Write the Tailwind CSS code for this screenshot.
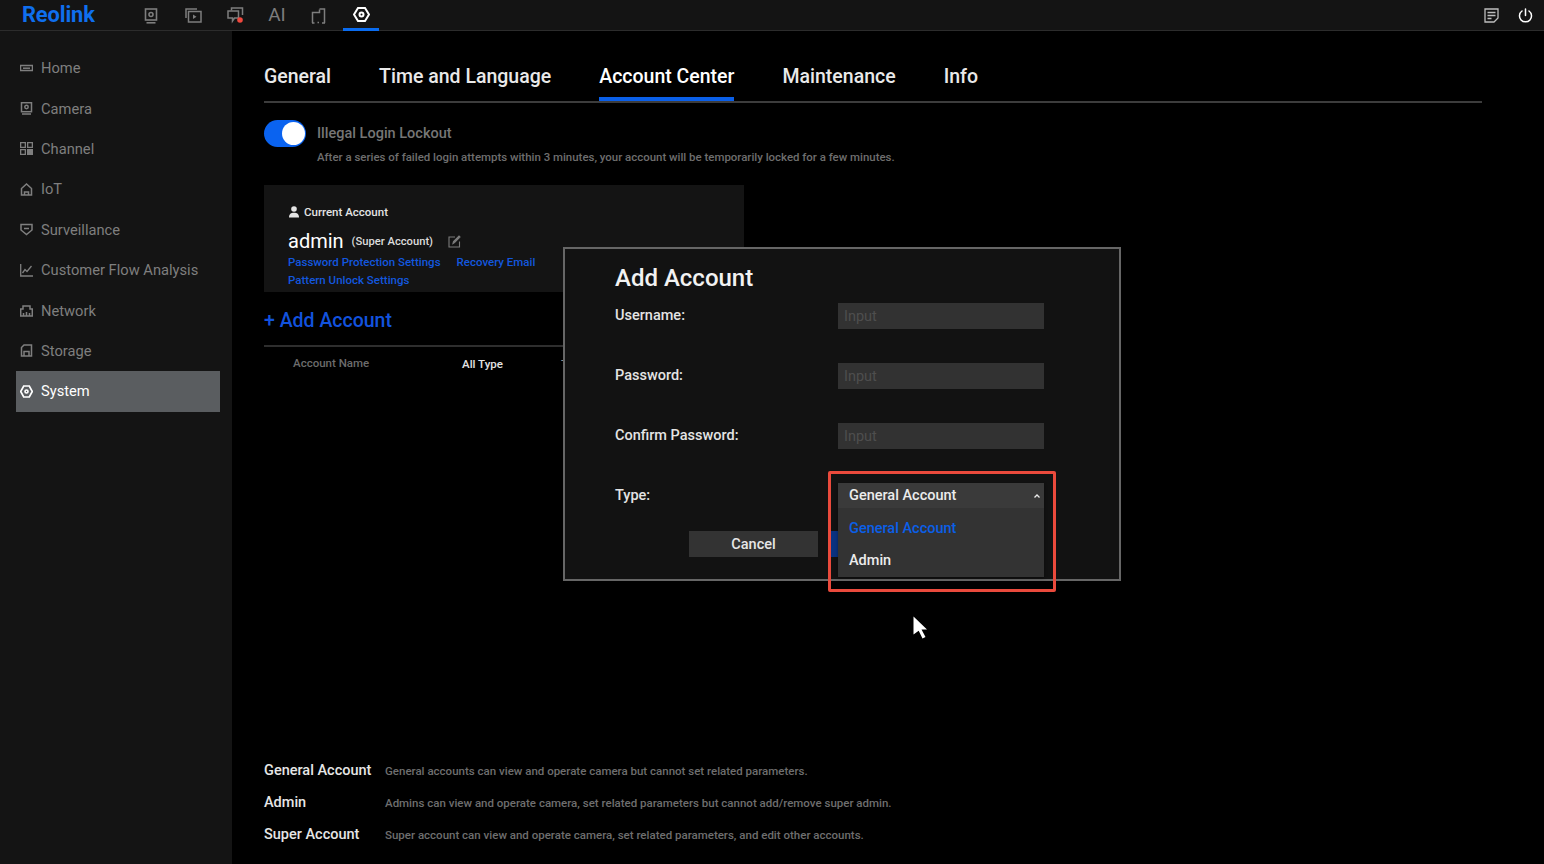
<!DOCTYPE html>
<html lang="en">
  <head>
    <meta charset="UTF-8" />
    <title>Reolink - Account Center</title>
    <script src="https://cdn.jsdelivr.net/npm/@tailwindcss/browser@4"></script>
  </head>
  <body class="bg-black font-['Roboto',sans-serif] text-white">
    <div class="relative flex h-[864px] w-[1544px] flex-col overflow-hidden">
      <!-- top bar -->
      <header class="flex h-[31px] shrink-0 items-center border-b border-[#2c2c2c] bg-[#141414]">
        <span class="ml-[22px] w-[120px] pb-[1px] text-[21.800px] font-bold leading-[28px] tracking-[-0.1px] text-[#0f6fee]">Reolink</span>
        <nav class="flex h-[31px] items-center self-start text-[#7d7d7d]">
          <a class="flex h-full w-[18px] items-center justify-center">
            <svg class="h-[16px] w-[14px]" viewBox="0 0 14 16" fill="none" stroke="currentColor" stroke-width="1.600"><rect x="1.500" y="1" width="11" height="11"/><circle cx="7" cy="6.500" r="2"/><path d="M2.500 14.800h9"/></svg>
          </a>
          <a class="ml-[24px] flex h-full w-[18px] items-center justify-center">
            <svg class="size-[17px]" viewBox="0 0 17 17" fill="none" stroke="currentColor" stroke-width="1.500"><path d="M1 11V2h11"/><rect x="3.500" y="4.500" width="12.500" height="10.500"/><path d="M8 7.500v4.500l3.500-2.200z" fill="currentColor" stroke="none"/></svg>
          </a>
          <a class="ml-[24px] flex h-full w-[18px] items-center justify-center">
            <svg class="size-[17px]" viewBox="0 0 17 17" fill="none" stroke="currentColor" stroke-width="1.500"><path d="M4.500 3.500v-2.500h11v7"/><path d="M1 4h10.500v7H7.500l-2 3v-3H1z"/><circle cx="13" cy="13" r="2.800" fill="#f0483e" stroke="none"/></svg>
          </a>
          <span class="ml-[24px] w-[18px] text-center text-[19px]">AI</span>
          <a class="ml-[23px] flex h-full w-[18px] items-center justify-center">
            <svg class="h-[16px] w-[15px]" viewBox="0 0 15 16" fill="none" stroke="currentColor" stroke-width="1.500"><path d="M1.500 15V4.500h7V1.500"/><path d="M8.500 1h5V15"/><path d="M1 15h2.500M6.500 14.500h1.500M11 15h3"/></svg>
          </a>
          <a class="ml-[16px] flex h-full w-[36px] items-center justify-center border-b-[3px] border-[#0a6cf0] text-white">
            <svg class="size-[17px]" viewBox="0 0 17 17" fill="none" stroke="currentColor" stroke-width="2"><path d="M5 2h7l4 6.500-4 6.500H5L1 8.500z"/><circle cx="8.500" cy="8.500" r="2"/></svg>
          </a>
        </nav>
        <div class="ml-auto flex items-center gap-[19px] pr-[11px] text-[#bdbdbd]">
          <svg class="size-[15px]" viewBox="0 0 15 15" fill="none" stroke="currentColor" stroke-width="1.300"><path d="M1 1h13v9l-4 4H1z"/><path d="M3.500 4.500h8M3.500 7.500h8M3.500 10.500h4"/></svg>
          <svg class="size-[15px] text-white" viewBox="0 0 15 15" fill="none" stroke="currentColor" stroke-width="1.500" stroke-linecap="round"><path d="M7.500 1v6.500"/><path d="M4 3a6 6 0 1 0 7 0"/></svg>
        </div>
      </header>

      <div class="flex min-h-0 flex-1">
        <!-- side menu -->
        <aside class="w-[232px] shrink-0 bg-[#141414] pt-[17px] text-[14.700px] text-[#7f7f7f]">
          <ul>
            <li class="ml-[16px] mr-[12px] flex h-[40.4px] items-center gap-[8px] pl-[4px]">
              <svg class="size-[13px] shrink-0" viewBox="0 0 13 13" fill="none" stroke="currentColor" stroke-width="1.500"><rect x="0.500" y="3.500" width="12" height="5"/><path d="M3 6.200h7"/></svg>Home
            </li>
            <li class="ml-[16px] mr-[12px] flex h-[40.4px] items-center gap-[8px] pl-[4px]">
              <svg class="size-[13px] shrink-0" viewBox="0 0 13 13" fill="none" stroke="currentColor" stroke-width="1.500"><rect x="1.500" y="0.700" width="10" height="9"/><circle cx="6.500" cy="5" r="1.700"/><path d="M2 12h9"/></svg>Camera
            </li>
            <li class="ml-[16px] mr-[12px] flex h-[40.4px] items-center gap-[8px] pl-[4px]">
              <svg class="size-[13px] shrink-0" viewBox="0 0 13 13" fill="currentColor"><path d="M0 0h6v6H0zM1.300 1.300v3.400h3.400V1.300zM7 0h6v6H7zM8.300 1.300v3.400h3.400V1.300zM0 7h6v6H0zM1.300 8.300v3.400h3.400V8.300zM7 7h6v6H7z" fill-rule="evenodd"/></svg>Channel
            </li>
            <li class="ml-[16px] mr-[12px] flex h-[40.4px] items-center gap-[8px] pl-[4px]">
              <svg class="size-[13px] shrink-0" viewBox="0 0 13 13" fill="none" stroke="currentColor" stroke-width="1.500"><path d="M1.500 12V5.500l5-4.500 5 4.500V12z"/><path d="M4.500 12V9h4v3"/></svg>IoT
            </li>
            <li class="ml-[16px] mr-[12px] flex h-[40.4px] items-center gap-[8px] pl-[4px]">
              <svg class="size-[13px] shrink-0" viewBox="0 0 13 13" fill="none" stroke="currentColor" stroke-width="1.500"><path d="M1 1.500h11v5.500l-5.500 4.500L1 7z"/><path d="M4 5.500h5"/></svg>Surveillance
            </li>
            <li class="ml-[16px] mr-[12px] flex h-[40.4px] items-center gap-[8px] pl-[4px]">
              <svg class="size-[13px] shrink-0" viewBox="0 0 13 13" fill="none" stroke="currentColor" stroke-width="1.300"><path d="M0.700 0v12h12.300"/><path d="M2.500 9l2.500-3.500 2 2L11.500 2"/></svg>Customer Flow Analysis
            </li>
            <li class="ml-[16px] mr-[12px] flex h-[40.4px] items-center gap-[8px] pl-[4px]">
              <svg class="size-[13px] shrink-0" viewBox="0 0 13 13" fill="none" stroke="currentColor" stroke-width="1.500"><path d="M0.700 12V5h2.300V2h7v3h2.300v7z"/><path d="M3.500 12V9M6.500 12V8M9.500 12V9"/></svg>Network
            </li>
            <li class="ml-[16px] mr-[12px] flex h-[40.4px] items-center gap-[8px] pl-[4px]">
              <svg class="size-[13px] shrink-0" viewBox="0 0 13 13" fill="none" stroke="currentColor" stroke-width="1.500"><path d="M1.500 12V3.500L4 1h7.500v11z"/><path d="M4 12V7.500h5V12"/></svg>Storage
            </li>
            <li class="ml-[16px] mr-[12px] flex h-[40.4px] items-center gap-[8px] bg-[#5a5d60] pl-[4px] text-white">
              <svg class="size-[13px] shrink-0" viewBox="0 0 13 13" fill="none" stroke="currentColor" stroke-width="1.700"><path d="M3.700 1h5.600l3 5.500-3 5.500H3.700l-3-5.500z"/><circle cx="6.500" cy="6.500" r="1.500"/></svg>System
            </li>
          </ul>
        </aside>

        <!-- main -->
        <main class="flex min-w-0 flex-1 flex-col pl-[32px] pr-[62px] pb-[13px]">
          <div class="flex gap-[48px] border-b-2 border-[#3c3c3c] pt-[33px] text-[19.500px] font-medium leading-[26px] text-[#e9e9e9]">
            <span class="pb-[11px]">General</span>
            <span class="pb-[11px]">Time and Language</span>
            <span class="border-b-4 border-[#0a5fe8] pb-[7px] text-white">Account Center</span>
            <span class="pb-[11px]">Maintenance</span>
            <span class="pb-[11px]">Info</span>
          </div>

          <div class="mt-[17px] flex gap-[11px]">
            <div class="flex h-[27px] w-[42px] justify-end rounded-full bg-[#0a63f0] p-[2px] pr-[1px]">
              <div class="size-[23px] rounded-full bg-white"></div>
            </div>
            <div>
              <p class="text-[14.500px] font-medium leading-[27px] text-[#767676]">Illegal Login Lockout</p>
              <p class="mt-[1px] text-[11.450px] font-medium leading-[18px] text-[#6e6e6e]">After a series of failed login attempts within 3 minutes, your account will be temporarily locked for a few minutes.</p>
            </div>
          </div>

          <section class="mt-[19px] h-[107px] w-[480px] bg-[#141414] pl-[24px] pt-[19px]">
            <div class="flex items-center gap-[4px] text-[11.500px] font-medium leading-[16px] text-[#e4e4e4]">
              <svg class="size-[12px]" viewBox="0 0 12 12" fill="currentColor"><circle cx="6" cy="3" r="2.800"/><path d="M1 11.500c0-3.500 2-4.800 5-4.800s5 1.300 5 4.800z"/></svg>
              Current Account
            </div>
            <div class="mt-[8px] flex items-center text-white">
              <span class="text-[20px] leading-[26px]">admin</span>
              <span class="ml-[8px] pt-[2px] text-[11.200px] font-medium text-[#dcdcdc]">(Super Account)</span>
              <svg class="ml-[15px] size-[13px] text-[#7b7b7b]" viewBox="0 0 13 13" fill="none" stroke="currentColor" stroke-width="1.100"><path d="M11.500 6.500v5.500H1V2h6"/><path d="M5 8.500l.5-2L11 1l1 1-5.500 5.500z" fill="currentColor"/></svg>
            </div>
            <div class="-mt-[1px] flex text-[11.500px] font-medium leading-[18px] text-[#1357de]">
              <span>Password Protection Settings</span>
              <span class="ml-[16px]">Recovery Email</span>
            </div>
            <p class="text-[11.500px] font-medium leading-[18px] text-[#1357de]">Pattern Unlock Settings</p>
          </section>

          <p class="mt-[15px] text-[19.500px] font-medium leading-[27px] text-[#1252dd]">+ Add Account</p>

          <div class="mt-[11px] flex h-[38px] w-[480px] items-center border-t-2 border-[#2e2e2e] text-[11.500px] font-medium">
            <span class="w-[198px] pb-[2px] pl-[29px] text-[#6c6c6c]">Account Name</span>
            <span class="w-[99px] text-[#e4e4e4]">All Type</span>
            <span class="text-[#8a8a8a]">Type</span>
          </div>

          <dl class="mt-auto text-[14.500px] font-medium leading-[32px] text-[#e6e6e6]">
            <div class="flex items-center">
              <dt class="w-[121px]">General Account</dt>
              <dd class="pb-[1px] text-[11.500px] leading-[30px] text-[#6e6e6e]">General accounts can view and operate camera but cannot set related parameters.</dd>
            </div>
            <div class="flex items-center">
              <dt class="w-[121px]">Admin</dt>
              <dd class="pb-[1px] text-[11.500px] leading-[30px] text-[#6e6e6e]">Admins can view and operate camera, set related parameters but cannot add/remove super admin.</dd>
            </div>
            <div class="flex items-center">
              <dt class="w-[121px]">Super Account</dt>
              <dd class="pb-[1px] text-[11.500px] leading-[30px] text-[#6e6e6e]">Super account can view and operate camera, set related parameters, and edit other accounts.</dd>
            </div>
          </dl>
        </main>
      </div>

      <!-- add account dialog -->
      <div class="absolute left-[563px] top-[247px] h-[334px] w-[558px] border-2 border-[#666666] bg-[#121212] pl-[50px] pt-[13px]">
        <h2 class="text-[24px] font-medium leading-[32px] text-[#f2f2f2]">Add Account</h2>
        <div class="mt-[9px] flex h-[26px] items-center">
          <label class="w-[223px] text-[14.500px] font-medium text-[#e4e4e4]">Username:</label>
          <div class="flex h-[26px] w-[206px] items-center bg-[#323232] px-[6px] pt-[1px] text-[14.500px] text-[#4e4e4e]">Input</div>
        </div>
        <div class="mt-[34px] flex h-[26px] items-center">
          <label class="w-[223px] text-[14.500px] font-medium text-[#e4e4e4]">Password:</label>
          <div class="flex h-[26px] w-[206px] items-center bg-[#323232] px-[6px] pt-[1px] text-[14.500px] text-[#4e4e4e]">Input</div>
        </div>
        <div class="mt-[34px] flex h-[26px] items-center">
          <label class="w-[223px] text-[14.500px] font-medium text-[#e4e4e4]">Confirm Password:</label>
          <div class="flex h-[26px] w-[206px] items-center bg-[#323232] px-[6px] pt-[1px] text-[14.500px] text-[#4e4e4e]">Input</div>
        </div>
        <div class="mt-[34px] flex h-[26px] items-center">
          <label class="w-[223px] text-[14.500px] font-medium text-[#e4e4e4]">Type:</label>
          <div class="h-[26px] w-[206px]"></div>
        </div>
        <div class="ml-[74px] mt-[22px] flex gap-[12px]">
          <button class="h-[26px] w-[129px] bg-[#333333] pt-[1px] text-[14.500px] font-medium text-[#e6e6e6]">Cancel</button>
          <button class="h-[26px] w-[129px] bg-[#0a3280]"></button>
        </div>

        <!-- opened select, sits over the buttons -->
        <div class="absolute left-[273px] top-[234px] w-[206px] bg-[#333333] text-[14.500px] font-medium shadow-[0_1px_3px_rgba(0,0,0,.4)]">
          <div class="flex h-[25px] items-center justify-between bg-[#3a3a3a] pl-[11px] pr-[3px] pt-[1px] text-[#ececec]">
            General Account
            <svg class="size-[8px]" viewBox="0 0 8 8" fill="none" stroke="currentColor" stroke-width="1.300"><path d="M1.500 5.500L4 3l2.500 2.500"/></svg>
          </div>
          <div class="h-[69px] pt-[5px]">
            <div class="flex h-[32px] items-center pl-[11px] text-[#0a5fe8]">General Account</div>
            <div class="flex h-[32px] items-center pl-[11px] text-[#ececec]">Admin</div>
          </div>
        </div>
      </div>

      <!-- annotation box and pointer -->
      <div class="absolute left-[828px] top-[471px] h-[121px] w-[228px] rounded-[2px] border-[3px] border-[#ea4a3c]"></div>
      <svg class="absolute left-[913px] top-[616px] h-[23px] w-[15px]" viewBox="0 0 15 23" fill="#ffffff"><path d="M0.500 0.500L14 13.500H8.500L12.500 21l-3 1.500-3.800-7.800L0.500 18.500z"/></svg>
    </div>
  </body>
</html>
